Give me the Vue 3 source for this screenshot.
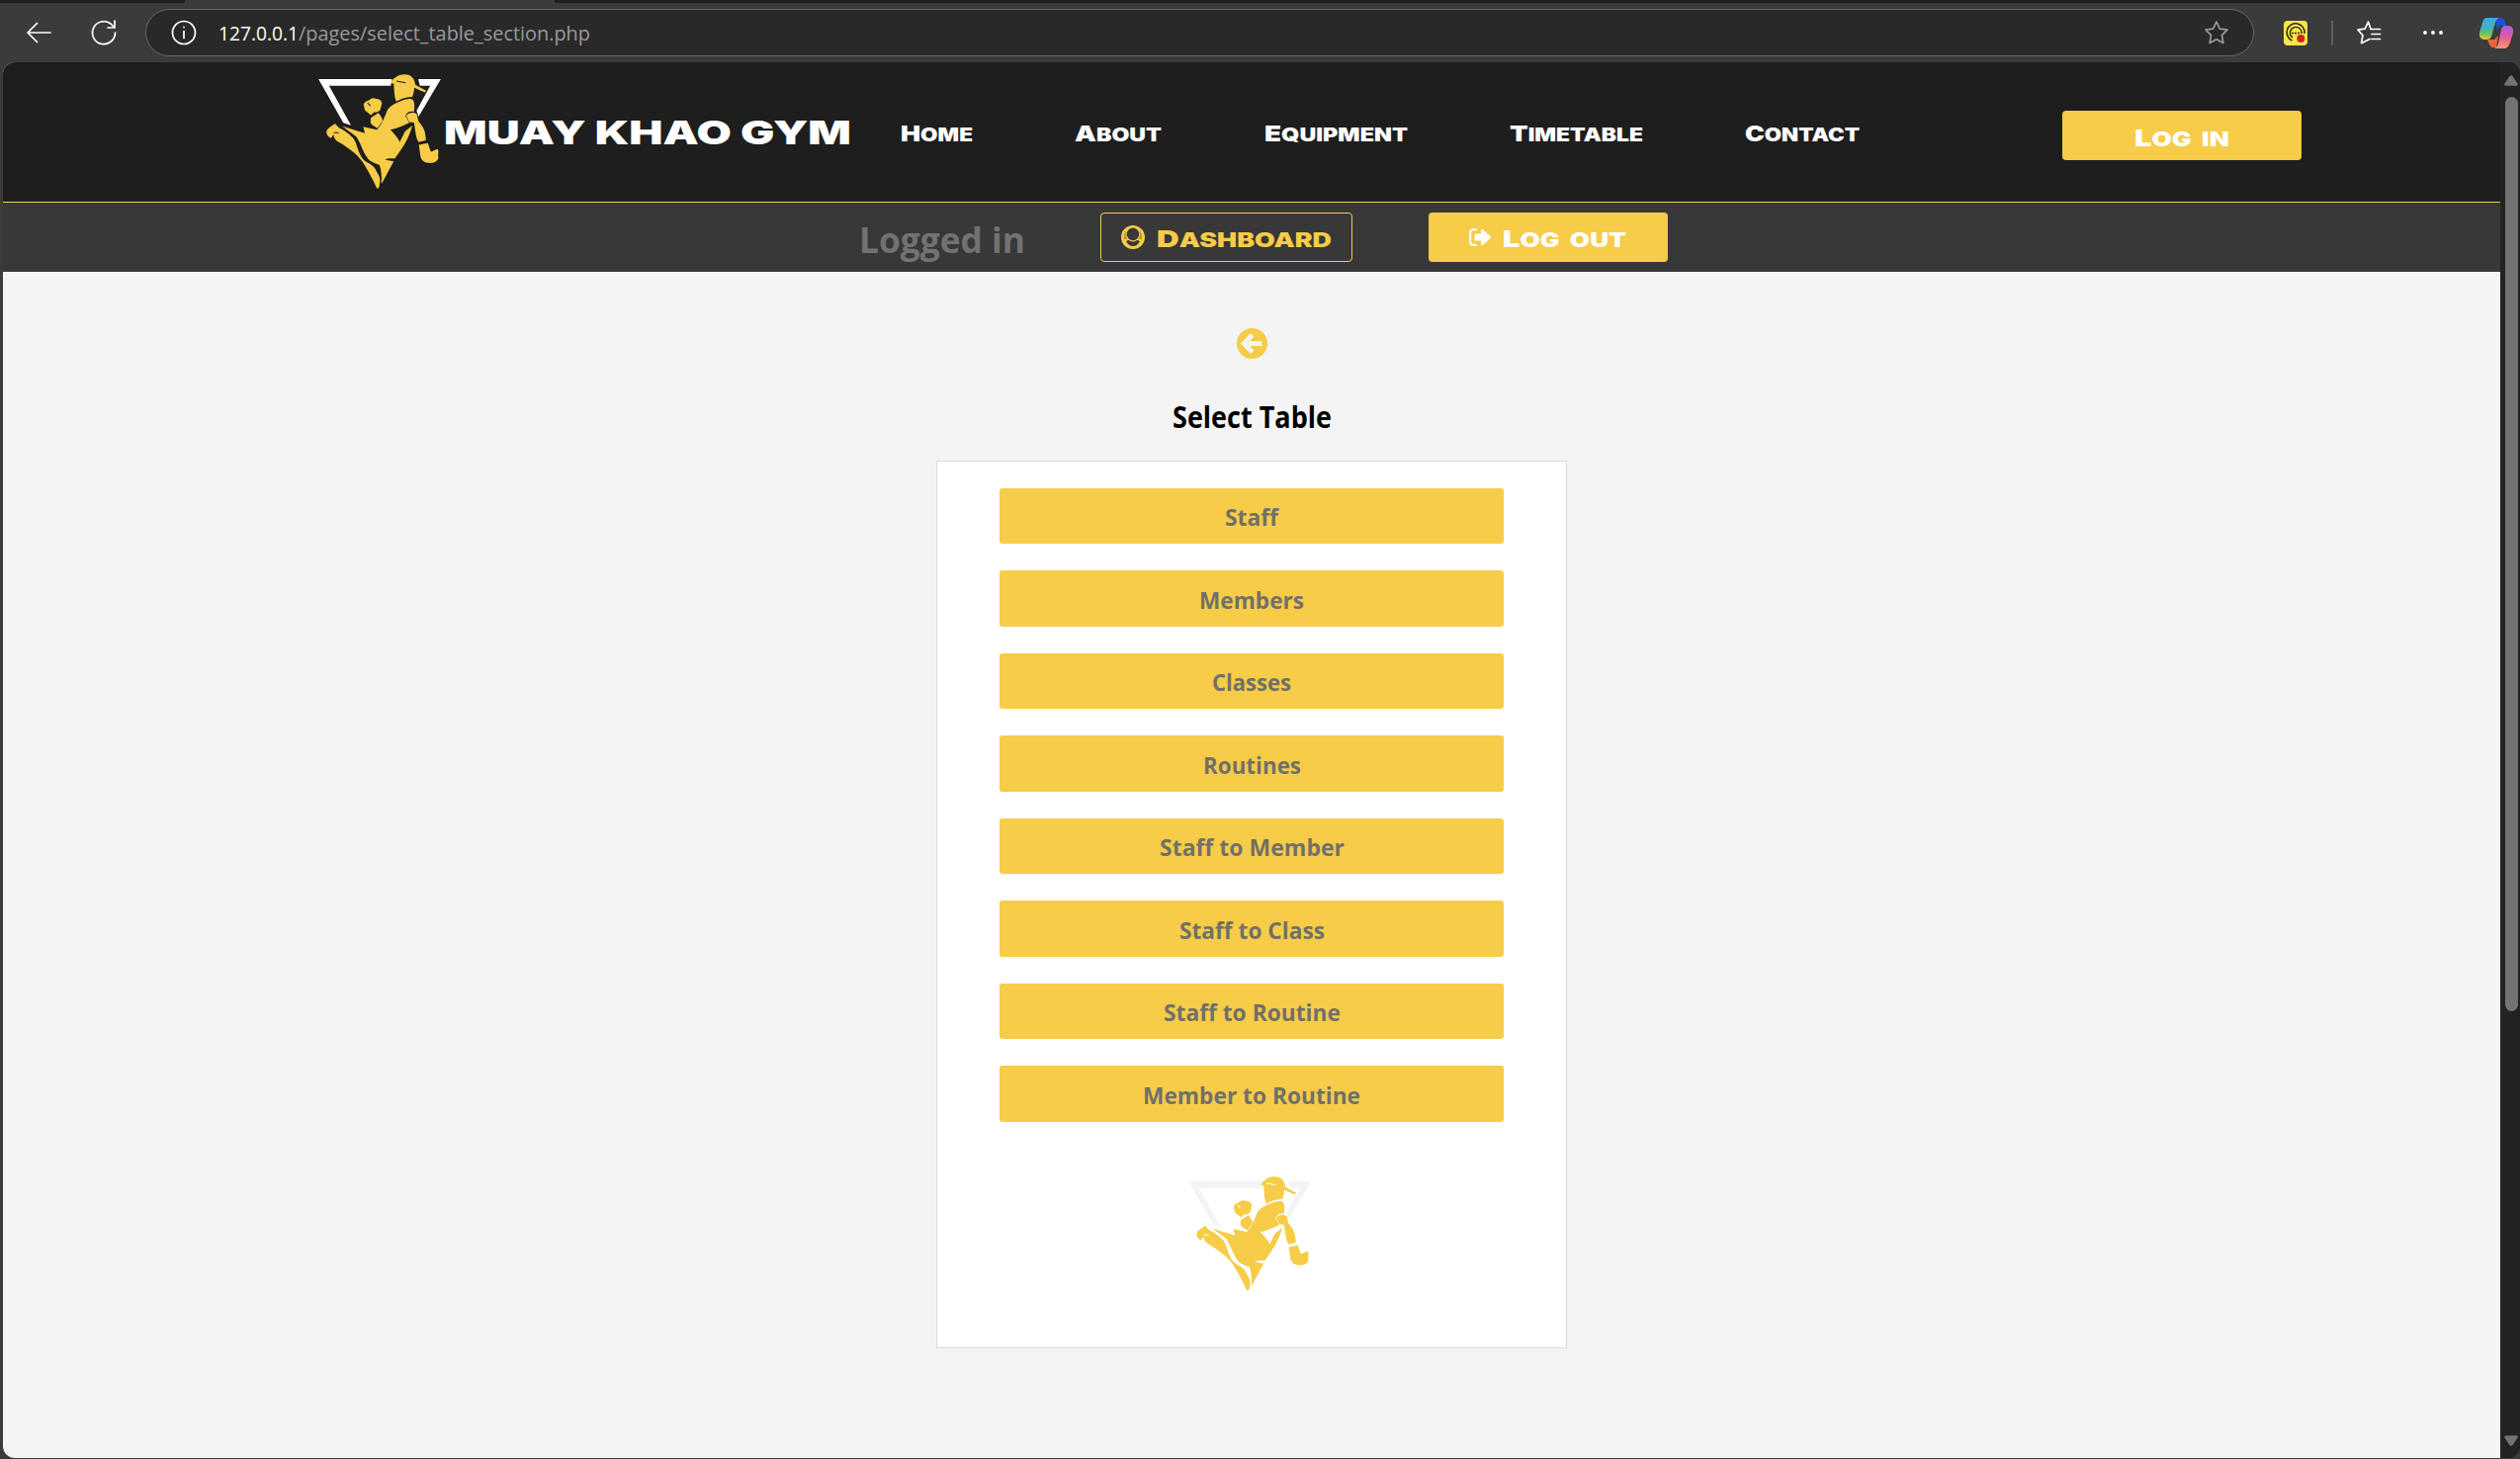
<script setup>
const nav = [
  { first: 'H', rest: 'ome', w: 73 },
  { first: 'A', rest: 'bout', w: 88 },
  { first: 'E', rest: 'quipment', w: 145 },
  { first: 'T', rest: 'imetable', w: 135 },
  { first: 'C', rest: 'ontact', w: 116 }
]

const tables = [
  { name: 'Staff', w: 54 },
  { name: 'Members', w: 106 },
  { name: 'Classes', w: 80 },
  { name: 'Routines', w: 99 },
  { name: 'Staff to Member', w: 187 },
  { name: 'Staff to Class', w: 147 },
  { name: 'Staff to Routine', w: 179 },
  { name: 'Member to Routine', w: 220 }
]
</script>

<template>
  <div class="browser">
    <svg width="0" height="0" class="defs">
      <symbol id="fighter" viewBox="128 92 369 346">
        <path class="tri" d="M128 107H350L346 127H160L226 246L203 239Z" />
        <path class="tri" d="M429 107H497L430 220L424 202L465 127H434Z" />
        <g class="fig">
          <path d="M348 119C348 109 357 105 362 101C374 90 399 91 409 100C418 107 419 117 420 124L453 142L449 147L417 133C417 146 413 155 411 161C394 160 376 167 363 175C356 160 357 143 355 121Z" />
          <path d="M264 184C268 173 280 173 287 166C294 161 302 168 308 167C318 170 321 177 318 186L314 201L305 207H296L286 216L268 201Z" />
          <path d="M286 224L296 217L309 209C314 215 320 224 322 232L306 255C297 250 286 245 285 237Z" />
          <path d="M304 260C320 243 328 220 336 200C346 187 362 178 380 172C395 167 410 163 415 173C418 182 418 192 416 206C404 202 393 208 391 219L402 239C385 246 366 257 345 260C357 272 369 287 373 297L389 265L411 247C402 283 385 310 358 347C348 346 338 345 328 350L355 355L318 424C319 402 318 382 312 366C298 360 280 355 275 343C261 327 257 302 242 281L200 249L268 270L263 251Z" />
          <path d="M152 266C154 255 169 248 178 241L189 253C210 264 235 281 241 300C248 322 255 345 270 355C284 363 299 370 303 386C309 396 314 403 314 414L311 433Q307 441 303 434C294 413 275 379 262 358C242 329 207 307 184 294C176 288 173 280 174 273L166 285C158 283 152 275 152 266Z" />
          <path d="M393 219C395 207 415 205 424 212C429 221 426 232 434 240C449 258 451 270 452 292L430 297C420 281 421 260 416 238L402 237Z" />
          <path d="M431 305L458 300L467 326C475 326 480 317 488 319C492 325 487 335 490 345C487 358 471 362 458 360C445 358 436 350 435 335Z" />
        </g>
        <g class="cut">
          <path d="M363 113L391 118" />
          <path d="M276 179L285 188" />
          <path d="M174 270C179 266 184 268 189 270" />
        </g>
      </symbol>
    </svg>

    <div class="tabs"><div class="active-tab"></div></div>
    <div class="toolbar">
      <svg class="ic back" width="26" height="24" viewBox="0 0 26 24"><path d="M25 12H2M11.5 2.5L2 12L11.5 21.5" /></svg>
      <svg class="ic reload" width="26" height="26" viewBox="0 0 26 26"><path d="M24.5 13A11.5 11.5 0 1 1 20 4L24 8M24 1V8H17" /></svg>
      <div class="address">
        <svg class="ic" width="26" height="26" viewBox="0 0 26 26"><circle cx="13" cy="13" r="11.5" /><path d="M13 11.5V18.5M13 7.4V7.6" /></svg>
        <svg class="url" width="376" height="30">
          <text y="22.6" class="host" textLength="81" lengthAdjust="spacingAndGlyphs">127.0.0.1</text>
          <text x="81" y="22.6" textLength="295" lengthAdjust="spacingAndGlyphs">/pages/select_table_section.php</text>
        </svg>
        <svg class="ic star" width="26" height="26" viewBox="0 0 26 26"><path d="M13 2L16.4 9.2L24 10.2L18.5 15.6L19.8 23.5L13 19.8L6.2 23.5L7.5 15.6L2 10.2L9.6 9.2Z" /></svg>
      </div>
      <svg class="ext" width="24" height="25" viewBox="0 0 24 25">
        <rect width="24" height="25" rx="4" fill="#f7e74d" />
        <g fill="none" stroke="#29270f" stroke-width="1.5"><path d="M8.5 20A9 9 0 1 1 21 13" /><path d="M9 17A5.8 5.8 0 1 1 18 13" /></g>
        <g fill="#29270f"><circle cx="9" cy="12.5" r="1" /><circle cx="12" cy="12.5" r="1" /><circle cx="15" cy="12.5" r="1" /></g>
        <circle cx="17.3" cy="18" r="4" fill="#d02519" />
      </svg>
      <div class="divider"></div>
      <svg class="ic favs" width="26" height="26" viewBox="0 0 26 26"><path d="M15 9.5L12.5 2L9.2 9.2L2 10.2L7 15.7L5.5 23.7L14 19.5M15 9.5H24.5M16 14.5H24.5M16 19.5H24.5" /></svg>
      <svg class="dots" width="22" height="6"><circle cx="3" cy="3" r="1.9" /><circle cx="11" cy="3" r="1.9" /><circle cx="19" cy="3" r="1.9" /></svg>
      <svg class="copilot" width="34" height="31" viewBox="0 0 34 31">
        <defs>
          <linearGradient id="ca" x1="0" y1="0" x2="0" y2="1"><stop offset="0" stop-color="#3fa5ee" /><stop offset=".45" stop-color="#3fb4bd" /><stop offset=".75" stop-color="#78bf57" /><stop offset="1" stop-color="#e6cc35" /></linearGradient>
          <linearGradient id="cb" x1="0" y1="0" x2="0" y2="1"><stop offset="0" stop-color="#a75bea" /><stop offset=".5" stop-color="#e45a9c" /><stop offset="1" stop-color="#fa9a6c" /></linearGradient>
        </defs>
        <path fill="#1b4fcd" d="M16 0H22Q25 0 26 4L27 8H22Q19 8 18 13Z" />
        <path fill="#ec6238" d="M8 22H15L19 18L17 30H14Q11 30 10 27Z" />
        <path fill="url(#ca)" d="M8 0H20Q17 1 16 5L12 19Q11 22 7 22H5Q-1 22 0 15L3 5Q4 0 8 0Z" />
        <path fill="url(#cb)" d="M26 8H29Q35 8 34 15L31 25Q29 31 25 31H15Q18 30 19 26L22 12Q23 8 26 8Z" />
      </svg>
    </div>

    <div class="viewport">
      <main class="page">
        <header class="header">
          <svg class="logo" width="124" height="115.5"><use href="#fighter" width="124" height="116" /></svg>
          <svg class="brand" width="412" height="40"><text y="32" textLength="412" lengthAdjust="spacingAndGlyphs">MUAY KHAO GYM</text></svg>
          <nav class="nav">
            <svg v-for="n in nav" :key="n.first" :width="n.w" height="30">
              <text class="nt" y="23" :textLength="n.w" lengthAdjust="spacingAndGlyphs">{{ n.first }}<tspan class="sc">{{ n.rest }}</tspan></text>
            </svg>
          </nav>
          <div class="btn login">
            <svg width="96" height="30"><text class="bt" y="23" textLength="96" lengthAdjust="spacingAndGlyphs">L<tspan class="sc">og in</tspan></text></svg>
          </div>
        </header>

        <div class="session">
          <svg class="status" width="168" height="46"><text y="37" textLength="168" lengthAdjust="spacingAndGlyphs">Logged in</text></svg>
          <div class="btn dash">
            <svg class="user" width="24" height="24" viewBox="0 0 24 24">
              <circle cx="12" cy="12" r="12" />
              <g fill="#383838">
                <ellipse cx="12" cy="8.9" rx="6.2" ry="6.3" />
                <path d="M5.2 16.2Q7 14.6 8.4 15.3Q12 17.8 15.6 15.3Q17 14.6 18.8 16.2Q16.6 20.9 12 20.9Q7.4 20.9 5.2 16.2Z" />
                <path d="M3.2 14.5A9.3 9.3 0 0 1 6 5A9 9 0 0 0 6.4 13.4Q4.4 13.8 3.2 14.5ZM20.8 14.5A9.3 9.3 0 0 0 18 5A9 9 0 0 1 17.6 13.4Q19.6 13.8 20.8 14.5Z" opacity=".35" />
              </g>
            </svg>
            <svg width="177" height="30"><text class="bt" y="24" textLength="177" lengthAdjust="spacingAndGlyphs">D<tspan class="sc">ashboard</tspan></text></svg>
          </div>
          <div class="btn logout">
            <svg class="exit" width="22" height="18" viewBox="0 0 22 18">
              <path d="M8 1.2H4Q1.2 1.2 1.2 4V14Q1.2 16.8 4 16.8H8" fill="none" stroke="#fff" stroke-width="2" />
              <path fill="#fff" d="M5.5 5.5H12V1.5Q12.5 .2 13.8 1L21.4 8Q22 9 21.4 10L13.8 17Q12.5 17.8 12 16.5V12.5H5.5Z" />
            </svg>
            <svg width="125" height="30"><text class="bt" y="24" textLength="125" lengthAdjust="spacingAndGlyphs">L<tspan class="sc">og out</tspan></text></svg>
          </div>
        </div>

        <section class="content">
          <svg class="return" width="31" height="31" viewBox="0 0 31 31">
            <circle cx="15.5" cy="15.5" r="15.5" fill="#f6cc48" />
            <path d="M25.5 15.5H8M15.8 6.8L7.2 15.5L15.8 24.2" fill="none" stroke="#f4f4f4" stroke-width="4.8" />
          </svg>
          <svg class="title" width="161" height="40"><text y="32" textLength="161" lengthAdjust="spacingAndGlyphs">Select Table</text></svg>
          <div class="card">
            <div v-for="t in tables" :key="t.name" class="entry">
              <svg :width="t.w" height="34"><text y="27" :textLength="t.w" lengthAdjust="spacingAndGlyphs">{{ t.name }}</text></svg>
            </div>
            <svg class="mark" width="124" height="115.5"><use href="#fighter" width="124" height="116" /></svg>
          </div>
        </section>
      </main>
      <aside class="scroll">
        <svg width="14" height="11" viewBox="0 0 14 11"><path d="M5.5 1Q7 -.6 8.5 1L13.5 8.5Q14.4 10.5 12 10.8H2Q-.4 10.5 .5 8.5Z" /></svg>
        <div class="thumb"></div>
        <svg class="down" width="14" height="11" viewBox="0 0 14 11"><path d="M5.5 10Q7 11.6 8.5 10L13.5 2.5Q14.4 .5 12 .2H2Q-.4 .5 .5 2.5Z" /></svg>
      </aside>
    </div>
  </div>
</template>

<style>
body { margin: 0; overflow: hidden; }
</style>

<style scoped>
.browser {
  width: 2549px; height: 1476px; background: #3b3b3b; overflow: hidden;
  display: flex; flex-direction: column; box-sizing: border-box;
  font-family: "Open Sans", "Noto Sans", sans-serif;
}
svg { display: block; flex: none; overflow: visible; }
.defs { position: absolute; }
.tabs { height: 3px; background: #1f1f1f; flex: none; }
.active-tab { width: 374px; height: 3px; margin-left: 187px; background: #3b3b3b; }
.toolbar { height: 60px; flex: none; display: flex; align-items: center; padding-left: 26px; box-sizing: border-box; }
.ic { fill: none; stroke: #fff; stroke-width: 1.7; stroke-linecap: round; stroke-linejoin: round; }
.reload { margin-left: 40px; }
.address {
  margin-left: 29px; width: 2133px; height: 48px; box-sizing: border-box;
  border: 1.5px solid #686868; border-radius: 24px; background: #292929;
  display: flex; align-items: center; padding: 0 24px 0 25px; flex: none;
}
.url { margin-left: 22px; }
.url text { font: 20.5px "Open Sans", "Noto Sans", sans-serif; fill: #999; }
.url .host { fill: #fff; }
.star { margin-left: auto; stroke: #9a9a9a; }
.ext { margin-left: 30px; }
.divider { width: 2px; height: 25px; background: #5e5e5e; margin-left: 24px; }
.favs { margin-left: 23px; }
.dots { margin-left: 41px; fill: #fff; }
.copilot { margin-left: 36px; }

.viewport {
  margin-left: 3px; height: 1412px; flex: none; display: flex;
  border-radius: 12px; overflow: hidden; background: #232222;
}
.page { width: 2526px; background: #f4f4f4; display: flex; flex-direction: column; }
.header {
  height: 142px; box-sizing: border-box; background: #1e1e1e; border-bottom: 1px solid #f6cc48;
  display: flex; align-items: flex-start; padding-left: 319px; flex: none;
}
.logo { --t: #fff; --c: #1e1e1e; margin-top: 11.5px; }
.mark { --t: #f4f4f4; --c: #fff; margin: 28.5px 5px 0 0; }
.tri { fill: var(--t); }
.fig { fill: #f6cc48; }
.cut { fill: none; stroke: var(--c); stroke-width: 3; }
.brand { margin: 50.5px 0 0 3px; }
.brand text { font: 900 33px Inter, sans-serif; fill: #fff; }
.nav { display: flex; gap: 103.3px; margin: 57px 0 0 50px; }
.nt { font: 900 22px Inter, sans-serif; fill: #fff; }
.nt .sc { font-size: 18.5px; text-transform: uppercase; }
.btn { height: 50px; box-sizing: border-box; border-radius: 4px; display: flex; align-items: center; flex: none; }
.bt { font: 900 23.5px Inter, sans-serif; fill: #fff; }
.bt .sc { font-size: 20px; text-transform: uppercase; word-spacing: 4px; }
.login { width: 242px; background: #f6cc48; justify-content: center; margin: 49px 0 0 204.8px; padding-top: 5px; }

.session { height: 70px; background: #383838; display: flex; align-items: flex-start; padding: 10px 0 0 866px; box-sizing: border-box; flex: none; }
.status { margin-top: 4px; }
.status text { font: 700 36px "Open Sans", "Noto Sans", sans-serif; fill: #727272; }
.dash { width: 255px; margin-left: 76px; border: 1.5px solid #f6cc48; padding: 2px 0 0 20px; }
.dash .bt { fill: #f6cc48; }
.user { fill: #f6cc48; margin: -2px 12px 0 0; }
.logout { width: 242px; margin-left: 77px; background: #f6cc48; padding: 2px 0 0 41px; }
.exit { margin: -2px 12px 0 0; }

.content { display: flex; flex-direction: column; align-items: center; padding-top: 57px; }
.title { margin-top: 38px; }
.title text { font: 700 29.5px "Open Sans", "Noto Sans", sans-serif; fill: #000; }
.card {
  width: 638px; height: 898px; margin-top: 25px; box-sizing: border-box; background: #fff;
  border: 1.5px solid #dadada; display: flex; flex-direction: column; align-items: center; padding-top: 27px;
}
.entry {
  width: 510px; height: 56.4px; margin-bottom: 27.1px; flex: none; border-radius: 3px; background: #f6cc48;
  display: flex; align-items: center; justify-content: center;
}
.entry text { font: 700 23.5px "Open Sans", "Noto Sans", sans-serif; fill: #727068; }

.scroll { width: 20px; display: flex; flex-direction: column; align-items: center; padding: 13px 0 12px 2px; box-sizing: border-box; background: #232222; }
.scroll svg { fill: #737373; }
.thumb { width: 13px; height: 925px; margin-top: 11px; border-radius: 7px; background: #737373; }
.down { margin-top: auto; }
</style>
